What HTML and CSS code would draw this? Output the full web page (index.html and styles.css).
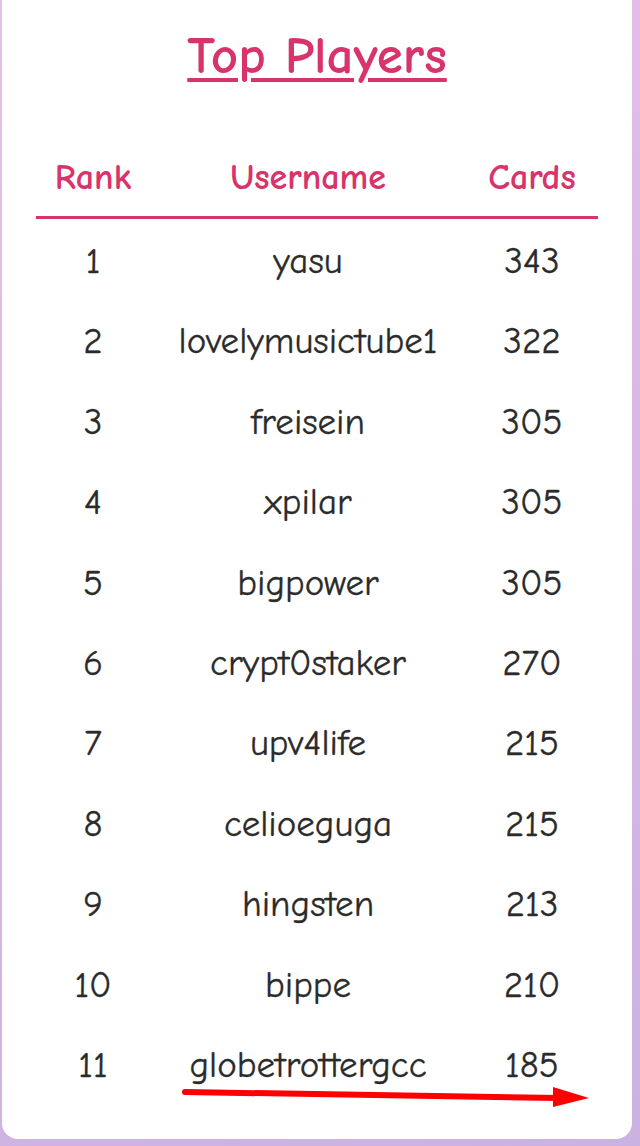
FILE: index.html
```html
<!DOCTYPE html>
<html>
<head>
<meta charset="utf-8">
<link rel="stylesheet" href="styles.css">
</head>
<body>
<div class="card">
  <h1 class="title">Top Players</h1>
  <table class="board">
    <thead>
      <tr><th class="c-rank">Rank</th><th class="c-user">Username</th><th class="c-cards">Cards</th></tr>
    </thead>
    <tbody>
      <tr><td>1</td><td>yasu</td><td>343</td></tr>
      <tr><td>2</td><td>lovelymusictube1</td><td>322</td></tr>
      <tr><td>3</td><td>freisein</td><td>305</td></tr>
      <tr><td>4</td><td>xpilar</td><td>305</td></tr>
      <tr><td>5</td><td>bigpower</td><td>305</td></tr>
      <tr><td>6</td><td>crypt0staker</td><td>270</td></tr>
      <tr><td>7</td><td>upv4life</td><td>215</td></tr>
      <tr><td>8</td><td>celioeguga</td><td>215</td></tr>
      <tr><td>9</td><td>hingsten</td><td>213</td></tr>
      <tr><td>10</td><td>bippe</td><td>210</td></tr>
      <tr><td>11</td><td>globetrottergcc</td><td>185</td></tr>
    </tbody>
  </table>
</div>
<svg class="annot" width="640" height="1146" viewBox="0 0 640 1146">
  <line x1="185" y1="1092" x2="558" y2="1098" stroke="#ff0000" stroke-width="6" stroke-linecap="round"/>
  <polygon points="553,1087 589,1098 553,1107" fill="#ff0000"/>
</svg>
</body>
</html>
```
FILE: styles.css
```css
html, body {
  margin: 0;
  padding: 0;
}
body {
  width: 640px;
  height: 1146px;
  overflow: hidden;
  position: relative;
  background: linear-gradient(160deg, #e6c0e8 0%, #d6b6e4 60%, #cab2e2 100%);
  font-family: "Comic Sans MS", "Comic Neue", "Open Sans", sans-serif;
  color: #2b2b2b;
}
.card {
  box-sizing: border-box;
  width: 630px;
  height: 1155px;
  margin: -16px 0 0 2px;
  background: #ffffff;
  border-radius: 16px;
  padding-top: 44px;
}
.title {
  margin: 0;
  text-align: center;
  font-size: 53px;
  line-height: 56px;
  font-weight: 700;
  color: #d8336a;
  text-decoration: underline;
  text-decoration-thickness: 4px;
  text-underline-offset: 5px;
}
.board {
  width: 562px;
  margin: 55px 0 0 34px;
  border-collapse: separate;
  border-spacing: 0;
  table-layout: fixed;
}
.board th {
  color: #d8336a;
  font-size: 36px;
  font-weight: 700;
  line-height: 40px;
  padding: 19px 0 18px;
  vertical-align: middle;
  border-bottom: 3px solid #d8336a;
}
.c-rank { width: 114px; }
.c-user { width: 316px; }
.c-cards { width: 132px; }
.board td {
  text-align: center;
  font-size: 37px;
  line-height: 75.4px;
  padding: 5px 0 0;
  vertical-align: middle;
  -webkit-text-stroke: 0.3px #2b2b2b;
}
.annot {
  position: absolute;
  left: 0;
  top: 0;
  pointer-events: none;
}
```
